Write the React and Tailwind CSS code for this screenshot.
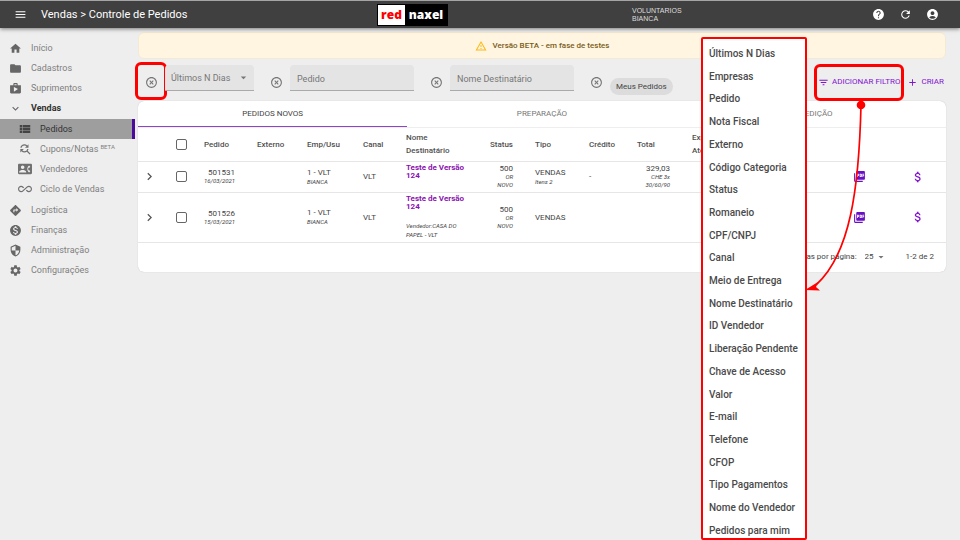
import React from "react";
import {
  MdMenu, MdHome, MdFolder, MdShop, MdExpandMore, MdViewList, MdFindReplace, MdContactPhone,
  MdAllInclusive, MdDirections, MdMonetizationOn, MdSecurity, MdSettings, MdHelp, MdRefresh,
  MdAccountCircle, MdPictureAsPdf, MdAttachMoney, MdChevronRight, MdFilterList, MdAdd,
  MdArrowDropDown, MdOutlineWarningAmber, MdHighlightOff,
} from "react-icons/md";

const mainMenu = [
  { icon: MdHome, label: "Início" },
  { icon: MdFolder, label: "Cadastros" },
  { icon: MdShop, label: "Suprimentos" },
];

const salesMenu = [
  { icon: MdViewList, label: "Pedidos", active: true },
  { icon: MdFindReplace, label: "Cupons/Notas", beta: true },
  { icon: MdContactPhone, label: "Vendedores" },
  { icon: MdAllInclusive, label: "Ciclo de Vendas" },
];

const otherMenu = [
  { icon: MdDirections, label: "Logística" },
  { icon: MdMonetizationOn, label: "Finanças" },
  { icon: MdSecurity, label: "Administração" },
  { icon: MdSettings, label: "Configurações" },
];

const filters = [
  "Últimos N Dias", "Empresas", "Pedido", "Nota Fiscal", "Externo", "Código Categoria", "Status",
  "Romaneio", "CPF/CNPJ", "Canal", "Meio de Entrega", "Nome Destinatário", "ID Vendedor",
  "Liberação Pendente", "Chave de Acesso", "Valor", "E-mail", "Telefone", "CFOP",
  "Tipo Pagamentos", "Nome do Vendedor", "Pedidos para mim",
];

const orders = [
  { id: "501531", date: "16/03/2021", items: "Itens 2", credit: "-", total: "329,03", terms: ["CHE 3x", "30/60/90"], height: "h-[31px]" },
  { id: "501526", date: "15/03/2021", seller: "Vendedor:CASA DO PAPEL - VLT", height: "h-[50px]" },
];

function TopBar() {
  return (
    <header className="relative z-10 grid h-7 grid-cols-[377fr_255fr_328fr] items-center border-t border-[#a5a5a5] bg-[#404040] text-white shadow-[0_1px_4px_rgba(0,0,0,0.5)]">
      <div className="flex items-center gap-3.5 pl-3.5">
        <button aria-label="Menu"><MdMenu size={13} /></button>
        <h1 className="text-[11px] leading-4">Vendas &gt; Controle de Pedidos</h1>
      </div>
      <div className="flex h-[22px] w-[71px] items-center bg-black p-px font-['Open_Sans',sans-serif] text-[12px] font-extrabold leading-none">
        <span className="flex h-full w-[27px] items-center justify-center bg-white text-[#f00]">red</span>
        <span className="flex-1 text-center">naxel</span>
      </div>
      <div className="flex items-center justify-between pr-[21px]">
        <p className="font-['Liberation_Sans',sans-serif] text-[7px] leading-[8px] text-[#ddd]">
          VOLUNTARIOS<br />BIANCA
        </p>
        <div className="flex items-center gap-3.5">
          <button aria-label="Ajuda"><MdHelp size={13} /></button>
          <button aria-label="Atualizar"><MdRefresh size={13} /></button>
          <button aria-label="Conta"><MdAccountCircle size={13} /></button>
        </div>
      </div>
    </header>
  );
}

function MenuItem({ icon: Icon, label }) {
  return (
    <li>
      <a href="#" className="flex h-5 items-center gap-[9px] pl-[9px]">
        <Icon size={13} className="text-[#666]" />
        <span>{label}</span>
      </a>
    </li>
  );
}

function Sidebar() {
  return (
    <nav className="w-[135px] shrink-0 pt-2.5 text-[9px] leading-3 text-[#808080]">
      <ul>
        {mainMenu.map((item) => <MenuItem key={item.label} {...item} />)}
        <li>
          <a href="#" className="flex h-5 items-center gap-[9px] pl-[9px] font-bold text-[#333]">
            <MdExpandMore size={13} className="text-[#666]" />
            <span>Vendas</span>
          </a>
          <ul className="py-px">
            {salesMenu.map(({ icon: Icon, label, active, beta }) => (
              <li key={label}>
                <a
                  href="#"
                  className={
                    active
                      ? "flex h-5 items-center gap-2 border-r-3 border-[#4a0a9c] bg-[#9e9e9e] pl-[18px] text-[#333]"
                      : "flex h-5 items-center gap-2 pl-[18px]"
                  }
                >
                  <Icon size={14} className={active ? "text-[#444]" : "text-[#707070]"} />
                  <span>
                    {label}
                    {beta && <sup className="ml-0.5 text-[6px]">BETA</sup>}
                  </span>
                </a>
              </li>
            ))}
          </ul>
        </li>
        {otherMenu.map((item) => <MenuItem key={item.label} {...item} />)}
      </ul>
    </nav>
  );
}

function RemoveButton({ name, highlighted }) {
  return (
    <button aria-label={"Remover filtro " + name} className="relative mt-[5px] flex size-6 items-center justify-center text-[#757575]">
      <MdHighlightOff size={13} />
      {highlighted && <span className="absolute -inset-x-[4px] -bottom-1.5 -top-2 rounded-md border-3 border-[#f00]" />}
    </button>
  );
}

function FilterBar() {
  return (
    <div className="mt-1.5 flex h-9 items-start pl-px text-[9px]">
      <div className="flex items-start gap-2.5">
        <div className="flex gap-0.5">
          <RemoveButton name="Últimos N Dias" highlighted />
          <div className="relative">
            <select aria-label="Últimos N Dias" className="h-[26px] w-[89px] appearance-none rounded-t border-b border-[#aaa] bg-[#e4e4e4] pl-1.5 pt-0.5 text-[#777]">
              <option>Últimos N Dias</option>
            </select>
            <MdArrowDropDown size={13} className="pointer-events-none absolute right-1 top-1.5 text-[#757575]" />
          </div>
        </div>
        {["Pedido", "Nome Destinatário"].map((name) => (
          <div key={name} className="flex gap-0.5">
            <RemoveButton name={name} />
            <input aria-label={name} placeholder={name} className="h-[26px] w-[124px] rounded-t border-b border-[#aaa] bg-[#e4e4e4] px-[7px] pt-0.5 placeholder:text-[#777]" />
          </div>
        ))}
        <div className="flex gap-0.5">
          <RemoveButton name="Meus Pedidos" />
          <span className="mt-[13px] h-[17px] rounded-full bg-[#dcdcdc] px-1.5 text-[8px] leading-[17px] text-[#444]">Meus Pedidos</span>
        </div>
      </div>
      <div className="ml-auto mt-[7px] flex items-center gap-[7px] pr-0.5 text-[8px] leading-5 text-[#8114d0]">
        <button className="relative flex items-center gap-[3px]">
          <MdFilterList size={11} />
          ADICIONAR FILTRO
          <span className="absolute -bottom-[9px] -inset-x-[4px] -top-2 rounded-md border-3 border-[#f00]" />
        </button>
        <button className="flex items-center gap-[3px]">
          <MdAdd size={11} />
          CRIAR
        </button>
      </div>
    </div>
  );
}

function OrdersTable() {
  return (
    <table className="w-full table-fixed text-left text-[8px] leading-[9px] text-[#444] [&_td]:px-1 [&_th]:px-1 [&_th]:font-medium [&_tr]:border-b [&_tr]:border-[#e6e6e6]">
      <colgroup>
        <col className="w-6" />
        <col className="w-[38px]" />
        <col className="w-[53px]" />
        <col className="w-[50px]" />
        <col className="w-14" />
        <col className="w-[43px]" />
        <col className="w-[70px]" />
        <col className="w-[45px]" />
        <col className="w-[14px]" />
        <col className="w-[54px]" />
        <col className="w-12" />
        <col className="w-[41px]" />
        <col className="w-[14px]" />
        <col />
        <col className="w-[60px]" />
        <col className="w-[57px]" />
      </colgroup>
      <thead>
        <tr className="h-[33px] text-[#505050]">
          <th />
          <th><input type="checkbox" aria-label="Selecionar todos" className="mx-auto block size-[11px] appearance-none rounded-[2px] border border-[#666]" /></th>
          <th>Pedido</th>
          <th>Externo</th>
          <th>Emp/Usu</th>
          <th>Canal</th>
          <th className="leading-[13px]">Nome Destinatário</th>
          <th className="text-right">Status</th>
          <th />
          <th>Tipo</th>
          <th>Crédito</th>
          <th>Total</th>
          <th />
          <th className="leading-[13px]">Exp<br />Ate</th>
          <th />
          <th />
        </tr>
      </thead>
      <tbody>
        {orders.map((o) => (
          <tr key={o.id} className={o.height}>
            <td><button aria-label="Expandir" className="block text-[#555]"><MdChevronRight size={15} /></button></td>
            <td><input type="checkbox" aria-label={"Selecionar " + o.id} className="mx-auto block size-[11px] appearance-none rounded-[2px] border border-[#666]" /></td>
            <td>
              <div className="w-[31px] text-right">{o.id}<em className="block text-[6px] leading-[8px]">{o.date}</em></div>
            </td>
            <td />
            <td>1 - VLT<em className="block text-[6px] leading-[9px]">BIANCA</em></td>
            <td>VLT</td>
            <td className="align-top">
              <a href="#" className="mt-0.5 block font-bold leading-[8px] text-[#8a12b0]">Teste de Versão 124</a>
              {o.seller && <em className="mt-2.5 block text-[6px] leading-[9px]">{o.seller}</em>}
            </td>
            <td className="text-right">500<em className="block text-[6px] leading-[8px]">OR<br />NOVO</em></td>
            <td />
            <td>VENDAS{o.items && <em className="block text-[6px] leading-[9px]">{o.items}</em>}</td>
            <td>{o.credit}</td>
            <td className="text-right">
              {o.total}
              {o.terms && <em className="block text-[6px] leading-[8px]">{o.terms[0]}<br />{o.terms[1]}</em>}
            </td>
            <td />
            <td />
            <td><button aria-label="PDF" className="mx-auto block text-[#6a10c4]"><MdPictureAsPdf size={13} /></button></td>
            <td><button aria-label="Pagamento" className="mx-auto block text-[#8114d0]"><MdAttachMoney size={14} /></button></td>
          </tr>
        ))}
      </tbody>
    </table>
  );
}

function OrdersCard() {
  return (
    <section className="rounded-md bg-white shadow-[0_0_1px_rgba(0,0,0,0.25)]">
      <div role="tablist" className="grid h-[27px] grid-cols-3 border-b border-[#eee] text-[8px] text-[#777]">
        <button role="tab" aria-selected="true" className="border-b border-[#8e44c9] text-[#444]">PEDIDOS NOVOS</button>
        <button role="tab">PREPARAÇÃO</button>
        <button role="tab">EXPEDIÇÃO</button>
      </div>
      <OrdersTable />
      <footer className="flex h-[29px] items-center justify-end pr-3 text-[8px] text-[#444]">
        <label htmlFor="page-size">Linhas por página:</label>
        <div className="relative ml-2 mr-[17px]">
          <select id="page-size" defaultValue="25" className="w-6 appearance-none">
            <option>25</option>
            <option>50</option>
          </select>
          <MdArrowDropDown size={12} className="pointer-events-none absolute left-2.5 top-0 text-[#757575]" />
        </div>
        <span>1-2 de 2</span>
      </footer>
    </section>
  );
}

function FilterMenu() {
  return (
    <ul className="absolute bottom-0 right-[153px] top-[37px] z-20 flex w-[106px] flex-col justify-between rounded-[2px] border-2 border-[#f00] bg-white pl-[6px] pt-2 text-[10px] leading-[14px] text-[#4a4a4a]">
      {filters.map((name) => (
        <li key={name} className="flex"><button className="whitespace-nowrap font-medium">{name}</button></li>
      ))}
    </ul>
  );
}

function Arrow() {
  return (
    <svg aria-hidden="true" className="pointer-events-none absolute right-[90px] top-[98px] z-30" width="70" height="196" viewBox="800 98 70 196">
      <circle cx="861" cy="105" r="4.3" fill="#f00" />
      <path d="M861 105C859 190 850 254 816 285" fill="none" stroke="#f00" strokeWidth="1.7" />
      <path d="M805 290L818 282L816 287L820 290.500Z" fill="#f00" />
    </svg>
  );
}

export default function App() {
  return (
    <div className="relative min-h-screen overflow-hidden bg-[#eee] font-[Roboto,sans-serif]">
      <TopBar />
      <div className="flex">
        <Sidebar />
        <main className="min-w-0 flex-1 pl-[3px] pr-3.5 pt-1">
          <div role="alert" className="flex h-[27px] items-center justify-center gap-1.5 rounded-md border border-[#f3ead6] bg-[#fff5e0] text-[8px] font-medium text-[#7a5c20]">
            <MdOutlineWarningAmber size={12} className="text-[#fbb917]" />
            Versão BETA - em fase de testes
          </div>
          <FilterBar />
          <OrdersCard />
        </main>
      </div>
      <FilterMenu />
      <Arrow />
    </div>
  );
}
